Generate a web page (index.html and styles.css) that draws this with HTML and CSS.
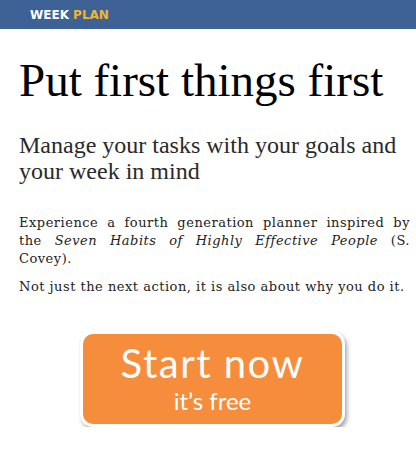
FILE: index.html
```html
<!doctype html>
<html lang="en">
  <head>
    <meta charset="UTF-8" />
    <meta name="viewport" content="width=device-width, initial-scale=1.0" />
    <title>Week Plan</title>
    <link rel="stylesheet" href="styles.css">
  </head>
  <body>
    <header class="topbar">
      <span class="brand">WEEK <span class="brand-accent">PLAN</span></span>
    </header>

    <main class="intro">
      <h1>Put first things first</h1>
      <h2>Manage your tasks with your goals and your week in mind</h2>

      <p class="lead">
        Experience a fourth generation planner inspired by the
        <em>Seven Habits of Highly Effective People</em> (S. Covey).
      </p>
      <p class="lead">Not just the next action, it is also about why you do it.</p>

      <div class="cta-row">
        <a class="start-btn" href="#">
          <span class="start-main">Start now</span>
          <span class="start-sub">it’s free</span>
        </a>
      </div>
    </main>
  </body>
</html>
```

FILE: styles.css
```css
* {
  margin: 0;
  padding: 0;
  box-sizing: border-box;
}

body {
  background: #fff;
  color: #111;
  font-family: "Liberation Serif", serif;
}

.topbar {
  height: 29px;
  background: #3f6296;
  padding-left: 30px;
  display: flex;
  align-items: center;
}

.brand {
  font-family: "DejaVu Sans", sans-serif;
  font-weight: 700;
  font-size: 12px;
  color: #fff;
}

.brand-accent {
  color: #f2b530;
}

.intro {
  padding: 26px 6px 0 19px;
}

h1 {
  font-size: 47px;
  font-weight: normal;
  line-height: 50px;
  color: #000;
}

h2 {
  margin-top: 27px;
  font-size: 24px;
  font-weight: normal;
  line-height: 26px;
  color: #2a2a2a;
}

.lead {
  font-family: "DejaVu Serif", serif;
  font-size: 13px;
  line-height: 18px;
  letter-spacing: 0.5px;
  text-align: justify;
  color: #222;
  margin-top: 30px;
}

.lead + .lead {
  margin-top: 10px;
}

.cta-row {
  display: flex;
  padding: 35px 0 0 61px;
}

.start-btn {
  width: 265px;
  height: 96px;
  background: #f68d3c;
  border: 3px solid #fff;
  border-radius: 13px;
  box-shadow: 2px 3px 4px rgba(0, 0, 0, 0.35);
  display: flex;
  flex-direction: column;
  align-items: center;
  text-decoration: none;
  color: #fff;
  font-family: "Lato", sans-serif;
}

.start-main {
  font-size: 40px;
  line-height: 40px;
  letter-spacing: 1.5px;
  margin-top: 9px;
}

.start-sub {
  font-size: 24px;
  line-height: 24px;
  margin-top: 6px;
}
```
